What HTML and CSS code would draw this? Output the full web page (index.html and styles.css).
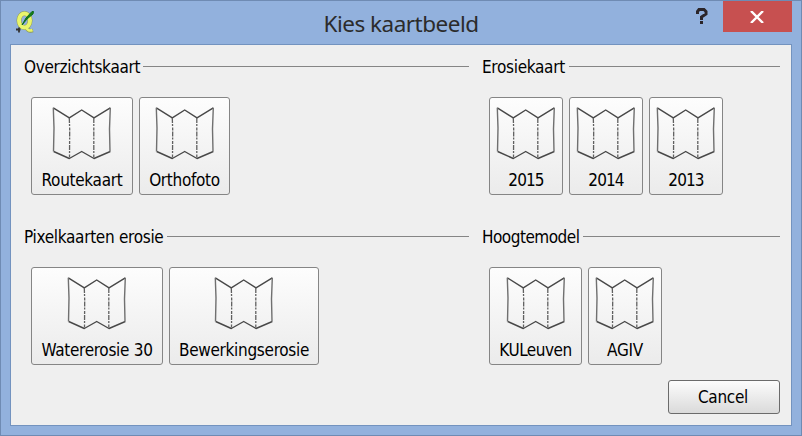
FILE: index.html
```html
<!DOCTYPE html>
<html lang="nl">
<head>
<meta charset="utf-8">
<title>Kies kaartbeeld</title>
<link rel="stylesheet" href="styles.css">
</head>
<body>
<svg class="defs" width="0" height="0" aria-hidden="true">
  <symbol id="map" viewBox="0 0 64 64">
    <g fill="none" stroke="#484848" stroke-linejoin="round">
      <path stroke-width="1.4" d="M3.300 9.800 19.300 19.900 31.700 12 44 19.900 60.300 9.800"/>
      <path stroke-width="1.400" d="M3.700 53.500 19.300 60.500 31.700 53.500 44 60.500 60.300 53.500"/>
      <path stroke-width="1.400" stroke="#707070" d="M3.300 9.800 4 30 3.500 53.500M60.300 9.800 59.500 31 60 53.500"/>
      <path stroke-width="1.300" stroke="#606060" stroke-dasharray="5 1 2 1.500 3 1" d="M19.300 20 19.700 32 19.500 60.500M43.800 20V60.500"/>
    </g>
  </symbol>
</svg>
<div class="window">
  <header class="titlebar">
    <svg class="logo" viewBox="0 0 18 24" width="18" height="24">
      <ellipse cx="8.500" cy="10.500" rx="5.500" ry="7" fill="none" stroke="#8c9a55" stroke-width="5"/>
      <path d="M10 17q2 5 7 3.500" fill="none" stroke="#8c9a55" stroke-width="3.500"/>
      <ellipse cx="8.500" cy="10.500" rx="5.500" ry="7" fill="none" stroke="#e9f56c" stroke-width="4"/>
      <path d="M10 17q2 5 6.500 3" fill="none" stroke="#e9f56c" stroke-width="2.500"/>
      <path d="M6 15 10 8 16 1.500 17.500 1.500 17 4 11 9Z" fill="#168016" stroke="#0f6a1b" stroke-width="1"/>
      <path d="M0 19.500h4.500M3 17.500v5" stroke="#333" stroke-width="1.800"/>
    </svg>
    <h1 class="title">Kies kaartbeeld</h1>
    <svg class="help" viewBox="0 0 12 16" width="12" height="16"><path fill="none" stroke="#2b2529" stroke-width="3" d="M1.500 6V3.500L3 1.500H8L10 3.500V6L5.500 9V12M4 14.500H7"/></svg>
    <button class="close" aria-label="Sluiten"><svg viewBox="0 0 14 12" width="14" height="12"><path fill="none" stroke="#fff" stroke-width="2.400" d="M1 0 13 12M13 0 1 12"/></svg></button>
  </header>
  <main class="panel">
    <section class="group">
      <h2 class="legend"><span class="overzicht">Overzichtskaart</span></h2>
      <div class="tools">
        <button class="tool w-route"><svg class="map"><use href="#map"/></svg><span>Routekaart</span></button>
        <button class="tool w-ortho"><svg class="map"><use href="#map"/></svg><span>Orthofoto</span></button>
      </div>
    </section>
    <section class="group">
      <h2 class="legend"><span class="erosie">Erosiekaart</span></h2>
      <div class="tools">
        <button class="tool year"><svg class="map"><use href="#map"/></svg><span>2015</span></button>
        <button class="tool year"><svg class="map"><use href="#map"/></svg><span>2014</span></button>
        <button class="tool year"><svg class="map"><use href="#map"/></svg><span>2013</span></button>
      </div>
    </section>
    <section class="group">
      <h2 class="legend"><span class="pixel">Pixelkaarten erosie</span></h2>
      <div class="tools">
        <button class="tool w-water"><svg class="map"><use href="#map"/></svg><span>Watererosie 30</span></button>
        <button class="tool w-bewerk"><svg class="map"><use href="#map"/></svg><span>Bewerkingserosie</span></button>
      </div>
    </section>
    <section class="group">
      <h2 class="legend"><span class="hoogte">Hoogtemodel</span></h2>
      <div class="tools">
        <button class="tool w-kul"><svg class="map"><use href="#map"/></svg><span>KULeuven</span></button>
        <button class="tool"><svg class="map"><use href="#map"/></svg><span>AGIV</span></button>
      </div>
    </section>
    <footer class="actions"><button class="cancel">Cancel</button></footer>
  </main>
</div>
</body>
</html>
```
FILE: styles.css
```css
* { box-sizing: border-box; }
body { margin: 0; font: 17px/20px "DejaVu Sans Condensed", "DejaVu Sans", sans-serif; letter-spacing: -0.3px; color: #000; }
button { font: inherit; letter-spacing: inherit; color: inherit; padding: 0; margin: 0; }
.defs { position: absolute; }
.window { width: 802px; height: 436px; background: #92b1dd; border: 1px solid #6f8bb3; padding: 0 9px 9px; }
.titlebar { height: 43px; display: flex; align-items: flex-start; }
.logo { margin: 9px 0 0 6px; }
.title { flex: 1; margin: 7px 0 0 72px; text-align: center; font: 400 22.5px/32px "Noto Sans", sans-serif; letter-spacing: -0.5px; color: #2b2b2b; }
.help { margin: 7px 15px 0 0; }
.close { width: 69px; height: 31px; border: 0; background: #c75050; display: flex; align-items: center; justify-content: center; }
.close svg { margin-right: 2px; }
.panel { height: 382px; border: 1px solid #7393bf; background: #efefef; padding: 12px 11px 11px 13px; display: grid; grid-template-columns: 445px 298px; column-gap: 13px; grid-template-rows: 170px 153px 34px; }
.legend { margin: 0; height: 20px; font: inherit; display: flex; gap: 3px; white-space: nowrap; }
.legend::after { content: ""; flex: 1; height: 1px; margin-top: 9px; background: #858585; }
.overzicht { width: 116px; }
.erosie { width: 84px; }
.pixel { width: 140px; }
.hoogte { width: 98px; letter-spacing: -0.5px; }
.tools { display: flex; gap: 6px; margin: 20px 0 0 7px; }
.tool { width: 74px; height: 98px; border: 1px solid #858585; border-radius: 3px; background: linear-gradient(#fdfdfd, #ebebeb); display: flex; flex-direction: column; align-items: center; white-space: nowrap; }
.map { width: 64px; height: 64px; flex: none; }
.tool span { margin-top: 8px; }
.year { letter-spacing: -0.9px; }
.w-route { width: 102px; }
.w-ortho { width: 91px; }
.w-water { width: 132px; }
.w-bewerk { width: 150px; }
.w-kul { width: 93px; letter-spacing: -0.5px; }
.actions { grid-column: 1 / -1; display: flex; justify-content: flex-end; }
.cancel { width: 112px; height: 34px; padding-right: 2px; border: 1px solid #6b6b6b; border-radius: 3px; background: linear-gradient(#fcfcfc, #dadada); }
```
